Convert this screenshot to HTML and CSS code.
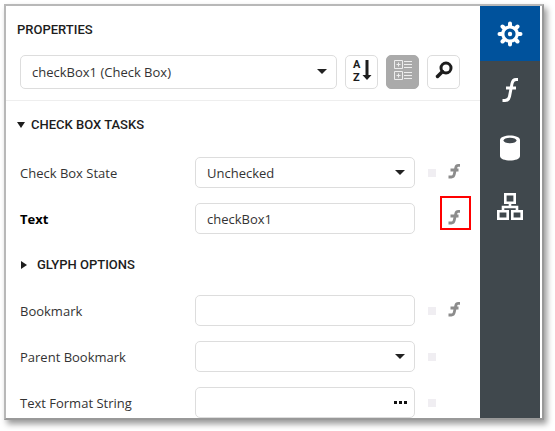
FILE: index.html
```html
<!DOCTYPE html>
<html lang="en">
<head>
    <meta charset="UTF-8">
    <meta name="viewport" content="width=device-width, initial-scale=1.0">
    <title>Properties</title>
    <link rel="stylesheet" href="styles.css">
</head>
<body>
    <svg class="sprite" width="0" height="0" aria-hidden="true">
        <symbol id="icon-expression" viewBox="0 0 12 16">
            <path d="M12 2.400H10.300C8.800 2.400 8.100 3.200 7.800 4.600L6.200 11.500C5.800 13.300 4.900 14 3.500 14H.5M2.500 7H10.500" fill="none" stroke="currentColor" stroke-width="2.800"/>
        </symbol>
    </svg>

    <div class="window">
        <main class="panel">
            <header class="panel-header">
                <h1>PROPERTIES</h1>
                <div class="toolbar">
                    <div class="field select">
                        <select aria-label="Element">
                            <option>checkBox1 (Check Box)</option>
                        </select>
                    </div>
                    <button class="tool" aria-label="Sort alphabetically">
                        <svg width="20" height="28" viewBox="0 0 20 28">
                            <text class="sort-letter" x="1" y="12">A</text>
                            <text class="sort-letter" x="1" y="25">Z</text>
                            <path d="M15 4V20" stroke="#1d1d1d" stroke-width="3"/>
                            <path d="M10.500 19H19.500L15 24Z" fill="#1d1d1d"/>
                        </svg>
                    </button>
                    <button class="tool active" aria-label="Group by category">
                        <svg width="18" height="20" viewBox="0 0 18 20" fill="none" stroke="#eee">
                            <path d="M.5 .5H8.500V8.500H.5ZM.5 11.500H8.500V19.500H.5Z"/>
                            <path d="M2.500 4.500H6.500M4.500 2.500V6.500M2.500 15.500H6.500M4.500 13.500V17.500M10 1.500H18M10 4.500H18M10 7.500H18M10 12.500H18M10 15.500H18M10 18.500H18"/>
                        </svg>
                    </button>
                    <button class="tool" aria-label="Search">
                        <svg width="18" height="18" viewBox="0 0 18 18" fill="none" stroke="#1d1d1d">
                            <circle cx="11" cy="7" r="5" stroke-width="3"/>
                            <path d="M7.500 10.500L2.500 15.500" stroke-width="3.500" stroke-linecap="round"/>
                        </svg>
                    </button>
                </div>
            </header>

            <section class="group">
                <h2><span class="caret open"></span>CHECK BOX TASKS</h2>
                <div class="row">
                    <label for="state">Check Box State</label>
                    <div class="field select">
                        <select id="state">
                            <option>Unchecked</option>
                        </select>
                    </div>
                    <button class="marker" aria-label="Check Box State menu"></button>
                    <button class="expression" aria-label="Check Box State expression"><svg><use href="#icon-expression"/></svg></button>
                </div>
                <div class="row">
                    <label class="modified" for="text">Text</label>
                    <div class="field">
                        <input id="text" type="text" value="checkBox1">
                    </div>
                    <button class="expression highlight" aria-label="Text expression"><svg><use href="#icon-expression"/></svg></button>
                </div>
                <h2 class="nested"><span class="caret"></span>GLYPH OPTIONS</h2>
                <div class="row">
                    <label for="bookmark">Bookmark</label>
                    <div class="field">
                        <input id="bookmark" type="text">
                    </div>
                    <button class="marker" aria-label="Bookmark menu"></button>
                    <button class="expression" aria-label="Bookmark expression"><svg><use href="#icon-expression"/></svg></button>
                </div>
                <div class="row">
                    <label for="parent">Parent Bookmark</label>
                    <div class="field select">
                        <select id="parent">
                            <option></option>
                        </select>
                    </div>
                    <button class="marker" aria-label="Parent Bookmark menu"></button>
                </div>
                <div class="row">
                    <label for="format">Text Format String</label>
                    <div class="field">
                        <input id="format" type="text">
                        <button class="more" aria-label="Edit format string">
                            <svg width="13" height="3" viewBox="0 0 13 3"><path d="M0 0H3V3H0ZM5 0H8V3H5ZM10 0H13V3H10Z" fill="#111"/></svg>
                        </button>
                    </div>
                    <button class="marker" aria-label="Text Format String menu"></button>
                </div>
            </section>
        </main>

        <nav class="tabs">
            <button class="tab current" aria-label="Properties">
                <svg width="26" height="26" viewBox="0 0 26 26" fill="none" stroke="#fff">
                    <circle cx="13" cy="13" r="7.200" stroke-width="3.200"/>
                    <circle cx="13" cy="13" r="2.200" fill="#fff" stroke="none"/>
                    <path d="M13 2.500V5M13 21V23.500M2.500 13H5M21 13H23.500M5.500 5.500L7.500 7.500M18.500 18.500L20.500 20.500M20.500 5.500L18.500 7.500M7.500 18.500L5.500 20.500" stroke-width="4" stroke-linecap="round"/>
                </svg>
            </button>
            <button class="tab" aria-label="Expressions">
                <svg width="18" height="26" viewBox="0 0 18 26" fill="none" stroke="#fff" stroke-width="3">
                    <path d="M17 2.500H15C12.500 2.500 11.500 4 11 6.500L8.500 19.500C8 22 6.500 23.500 4 23.500H1.500M5 11H15"/>
                </svg>
            </button>
            <button class="tab" aria-label="Fields">
                <svg width="20" height="26" viewBox="0 0 20 26">
                    <path d="M0 5C0-1 20-1 20 5V21C20 27 0 27 0 21Z" fill="#fff"/>
                    <ellipse cx="10" cy="5.500" rx="6.500" ry="2.800" fill="#40484d"/>
                </svg>
            </button>
            <button class="tab" aria-label="Report explorer">
                <svg width="28" height="28" viewBox="0 0 28 28" fill="none" stroke="#fff" stroke-width="2.600">
                    <path d="M9.300 2.300H18.700V10.700H9.300ZM2.300 19.300H11.700V26.700H2.300ZM16.300 19.300H25.700V26.700H16.300ZM14 11V15M7 19V15H21V19"/>
                </svg>
            </button>
        </nav>
    </div>
</body>
</html>
```

FILE: styles.css
```css
* {
    box-sizing: border-box;
}

body {
    margin: 0;
    padding: 4px 11px 10px 4px;
    background: #fff;
    color: #333;
    font-family: "Open Sans", "Noto Sans", sans-serif;
    font-size: 13px;
}

.sprite {
    position: absolute;
}

.window {
    display: flex;
    padding-right: 2px;
    border: 2px solid #b8b8b8;
    border-right-color: #999;
    border-bottom-color: #999;
    background: #fff;
    box-shadow: 3px 4px 6px rgba(0, 0, 0, 0.4);
}

.panel {
    flex: 1;
    min-width: 0;
}

.panel-header {
    padding: 14px 20px 11px 14px;
    border-bottom: 1px solid #eee;
}

h1,
h2 {
    margin: 0 0 0 -3px;
    color: #1d1d1d;
    font-family: Roboto, sans-serif;
    font-size: 13px;
    font-weight: 500;
    line-height: 20px;
}

.toolbar {
    display: flex;
    gap: 8px;
    margin-top: 15px;
}

.field {
    position: relative;
    flex: 1;
    min-width: 0;
}

.field input,
.field select {
    display: block;
    width: 100%;
    height: 31px;
    margin: 0;
    padding: 0 11px;
    border: 1px solid #ddd;
    border-radius: 5px;
    background: #fff;
    color: #333;
    font: inherit;
    appearance: none;
}

.toolbar .field select {
    height: 34px;
}

.select::after {
    content: "";
    position: absolute;
    top: 50%;
    right: 10px;
    margin-top: -3px;
    border: 5px solid transparent;
    border-top-color: #222;
    border-bottom: 0;
    pointer-events: none;
}

button {
    display: flex;
    align-items: center;
    justify-content: center;
    padding: 0;
    border: 0;
    background: none;
    cursor: pointer;
}

.tool {
    width: 33px;
    height: 34px;
    padding-bottom: 4px;
    border: 1px solid #ddd;
    border-radius: 5px;
}

.tool.active {
    border-color: #aaa;
    background: #aaa;
}

.sort-letter {
    fill: #1d1d1d;
    font-family: Roboto, sans-serif;
    font-size: 11px;
    font-weight: 700;
}

.group {
    display: grid;
    gap: 15px;
    padding: 14px 20px 0 14px;
}

.group h2 {
    display: flex;
    align-items: center;
    gap: 6px;
    margin-bottom: 7px;
}

.group .nested {
    height: 31px;
    margin-bottom: 0;
    padding-left: 4px;
    gap: 10px;
}

.caret {
    border: 4px solid transparent;
    border-left: 6px solid #1d1d1d;
    border-right: 0;
}

.caret.open {
    border: 4px solid transparent;
    border-top: 6px solid #1d1d1d;
    border-bottom: 0;
}

.row {
    display: flex;
    align-items: center;
    padding-right: 45px;
    position: relative;
}

.row label {
    width: 175px;
}

.row .modified {
    color: #000;
    font-weight: 700;
}

.marker {
    position: absolute;
    right: 24px;
    width: 8px;
    height: 8px;
    background: #f0eef2;
}

.expression {
    position: absolute;
    top: 6px;
    right: 0;
    width: 12px;
    height: 16px;
    color: #8c8c8c;
}

.expression svg {
    flex: none;
    width: 12px;
    height: 16px;
}

.highlight::after {
    content: "";
    position: absolute;
    inset: -13px -11px -5px -8px;
    border: 2px solid #f00;
}

.more {
    position: absolute;
    top: 0;
    right: 8px;
    height: 31px;
}

.tabs {
    width: 60px;
    background: #40484d;
}

.tab {
    width: 100%;
    height: 58px;
}

.tab.current {
    height: 55px;
    background: #00529c;
}
```
